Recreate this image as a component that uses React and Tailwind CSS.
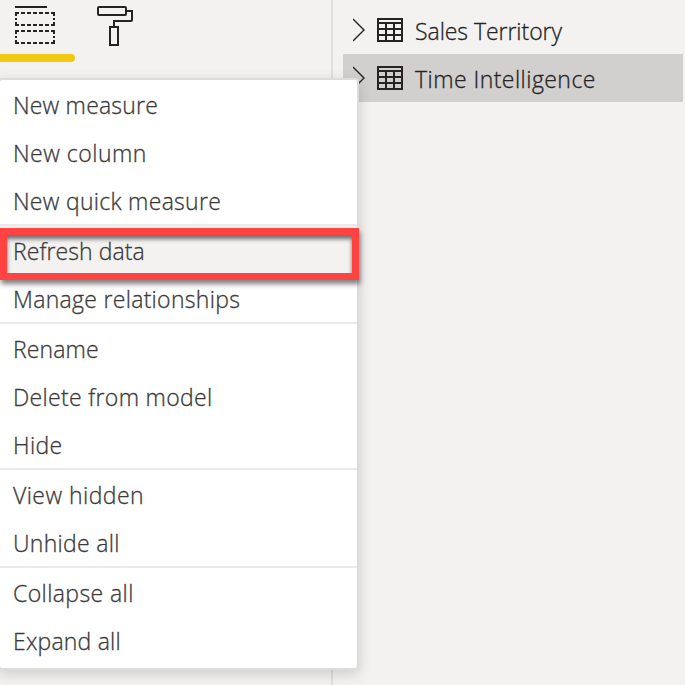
import React from "react";

function FieldsIcon() {
  return (
    <svg width="42" height="40" viewBox="0 0 42 40" fill="none" stroke="#252423" strokeWidth="2" shapeRendering="crispEdges">
      <path d="M1 3H33" />
      <path d="M1 9H41M1 21H41M1 27H41M1 39H41" strokeDasharray="4 2" />
      <path d="M2 8V22M40 8V22M2 26V40M40 26V40" strokeDasharray="4 2 2 2 4 2" />
    </svg>
  );
}

function FormatIcon() {
  return (
    <svg width="38" height="42" viewBox="0 0 38 42" fill="none" stroke="#252423" strokeWidth="2">
      <rect x="2" y="3" width="28" height="8" rx="1" />
      <path d="M30 7H36V16Q36 17 35 17H18V23" />
      <rect x="14" y="23" width="8" height="18" />
    </svg>
  );
}

function TableIcon() {
  return (
    <svg className="ml-3 shrink-0" width="26" height="24" viewBox="0 0 26 24" fill="none" stroke="#252423" strokeWidth="2" shapeRendering="crispEdges">
      <rect x="1" y="1" width="24" height="22" />
      <path d="M1 5H25M1 11H25M1 17H25M9 5V23M17 5V23" />
    </svg>
  );
}

function TableRow({ label, spacing, selected }) {
  return (
    <div className={`flex h-12 w-[340px] items-center pl-[10px] ${selected ? "bg-[#d1d0ce]" : ""}`}>
      <svg className="shrink-0" width="12" height="24" viewBox="0 0 12 24" fill="none" stroke="#252423" strokeWidth="1.4">
        <path d="M0 1L11 12L0 23" />
      </svg>
      <TableIcon />
      <span className={`ml-3 pt-0.5 whitespace-nowrap text-[23px] leading-[44px] text-[#252423] ${spacing}`}>{label}</span>
    </div>
  );
}

const groups = [
  [
    { label: "New measure", spacing: "tracking-[0.2px]" },
    { label: "New column", spacing: "tracking-[0.5px]" },
    { label: "New quick measure", spacing: "tracking-[0.28px]" },
  ],
  [
    { label: "Refresh data", spacing: "tracking-[0.08px]", hovered: true },
    { label: "Manage relationships", spacing: "tracking-[0.3px]" },
  ],
  [
    { label: "Rename", spacing: "tracking-[0.1px]" },
    { label: "Delete from model", spacing: "tracking-[0.33px]" },
    { label: "Hide", spacing: "tracking-[0.35px]" },
  ],
  [
    { label: "View hidden", spacing: "tracking-[0.45px]" },
    { label: "Unhide all", spacing: "tracking-[0.3px]" },
  ],
  [
    { label: "Collapse all", spacing: "tracking-[0.4px]" },
    { label: "Expand all", spacing: "tracking-[0.2px]" },
  ],
];

function ContextMenu() {
  return (
    <div className="absolute top-[78px] left-[-2px] h-[592px] w-[361px] rounded-[4px] border-2 border-[#dcdcdb] bg-white shadow-[0_4px_14px_rgba(0,0,0,0.16)]">
      {groups.map((group, i) => (
        <div key={i} className={i === 0 ? "h-36" : "border-t-2 border-[#eaeaea]"}>
          {group.map(({ label, spacing, hovered }) => (
            <div key={label} className={`flex h-12 items-center pt-0.5 pl-[13px] text-[23px] whitespace-nowrap text-[#3b3a39] ${spacing} ${hovered ? "bg-[#f3f2f1]" : ""}`}>
              {label}
            </div>
          ))}
        </div>
      ))}
    </div>
  );
}

export default function App() {
  return (
    <div className="relative flex h-[685px] w-[685px] overflow-hidden bg-[#f3f2f1] font-['Open_Sans','Noto_Sans',sans-serif] font-light [-webkit-text-stroke:0.3px]">
      <aside className="h-full w-[333px] border-r-2 border-[#e1dfdd]">
        <div className="flex h-[54px] pt-1 pl-[14px]">
          <FieldsIcon />
          <div className="ml-10"><FormatIcon /></div>
        </div>
        <div className="h-2 w-[75px] rounded-r-full bg-[#f2c811]" />
      </aside>
      <main className="pt-[6px] pl-[10px]">
        <TableRow label="Sales Territory" spacing="tracking-[-0.05px]" />
        <TableRow label="Time Intelligence" spacing="tracking-[0.45px]" selected />
      </main>
      <ContextMenu />
      <div className="absolute top-[228px] left-0 h-[52px] w-[359px] border-[7px] border-[#ff4343] shadow-[1px_4px_5px_rgba(0,0,0,0.5),inset_0px_4px_4px_rgba(0,0,0,0.55)]" />
    </div>
  );
}
